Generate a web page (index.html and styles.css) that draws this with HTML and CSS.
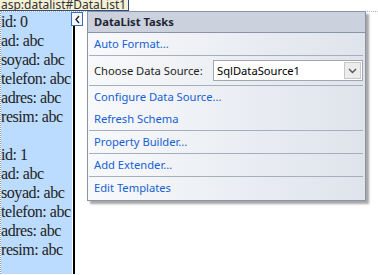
FILE: index.html
```html
<!DOCTYPE html>
<html lang="en">
  <head>
    <meta charset="UTF-8" />
    <title>DataList Tasks</title>
    <link rel="stylesheet" href="styles.css">
  </head>
  <body>
    <div class="design-tag">asp:datalist#DataList1</div>
    <div class="surface">
      <div class="datalist">
        <div class="item">
          <div>id: 0</div>
          <div>ad: abc</div>
          <div>soyad: abc</div>
          <div>telefon: abc</div>
          <div>adres: abc</div>
          <div>resim: abc</div>
        </div>
        <div class="item">
          <div>id: 1</div>
          <div>ad: abc</div>
          <div>soyad: abc</div>
          <div>telefon: abc</div>
          <div>adres: abc</div>
          <div>resim: abc</div>
        </div>
      </div>
      <div class="cell-edge"></div>

      <button class="smart-tag">
        <svg width="7" height="9" viewBox="0 0 7 9">
          <path d="M5 1 L2 4.5 L5 8" fill="none" stroke="#1e1e1e" stroke-width="1.3" />
        </svg>
      </button>

      <div class="tasks">
        <div class="tasks-head">DataList Tasks</div>
        <div class="tasks-group">
          <a class="task-link">Auto Format...</a>
        </div>
        <div class="tasks-group source-row">
          <span class="source-label">Choose Data Source:</span>
          <div class="combo">
            <span class="combo-text">SqlDataSource1</span>
            <span class="combo-btn">
              <svg width="9" height="6" viewBox="0 0 9 6">
                <path d="M1 1 L4.5 4.5 L8 1" fill="none" stroke="#555" stroke-width="1.4" />
              </svg>
            </span>
          </div>
        </div>
        <div class="tasks-group">
          <a class="task-link">Configure Data Source...</a>
          <a class="task-link">Refresh Schema</a>
        </div>
        <div class="tasks-group">
          <a class="task-link">Property Builder...</a>
        </div>
        <div class="tasks-group">
          <a class="task-link">Add Extender...</a>
        </div>
        <div class="tasks-group last">
          <a class="task-link">Edit Templates</a>
        </div>
      </div>
    </div>
  </body>
</html>
```

FILE: styles.css
```css
body {
  margin: 0;
  background: #fff;
  width: 378px;
  height: 275px;
  overflow: hidden;
  font-family: "Noto Sans", "Open Sans", sans-serif;
}
.design-tag {
  width: max-content;
  box-sizing: border-box;
  height: 12px;
  margin-top: -1px;
  padding: 0 2px 0 1px;
  background: #f4f1d6;
  border: 1px solid #2f4a86;
  border-left: none;
  font-size: 12px;
  line-height: 9px;
  color: #333;
  overflow: hidden;
}
.surface {
  position: relative;
  display: flex;
  border-top: 1px dotted #b0b0b0;
  border-left: 1px dotted #9a9a9a;
  height: 262px;
}
.datalist {
  width: 71px;
  background: #bcdcff;
  font-family: "Liberation Serif", serif;
  font-size: 16px;
  line-height: 19px;
  letter-spacing: -0.45px;
  color: #222;
  white-space: nowrap;
  overflow: hidden;
}
.item {
  margin-bottom: 19px;
}
.cell-edge {
  width: 2px;
  margin-left: 1px;
  background: #000;
}
.smart-tag {
  position: absolute;
  left: 70px;
  top: 0;
  width: 12px;
  height: 14px;
  padding: 0;
  border: 1px solid #3d6db5;
  background: #f4f6fa;
  display: flex;
  align-items: center;
  justify-content: center;
}
.tasks {
  position: absolute;
  left: 86px;
  top: -1px;
  width: 279px;
  height: 190px;
  box-sizing: border-box;
  border: 1px solid #8a93a8;
  background: linear-gradient(to right, #f8f9fb, #dfe4ec);
  box-shadow: 3px 3px 2px rgba(60, 60, 60, 0.45);
  font-size: 11.2px;
}
.tasks-head {
  height: 20px;
  line-height: 20px;
  padding-left: 6px;
  background: #ccd2dd;
  border-bottom: 1px solid #8a93a8;
  font-weight: bold;
  color: #1e2433;
}
.tasks-group {
  display: flex;
  flex-direction: column;
  border-bottom: 1px solid #a7afbf;
  margin: 0 2px 0 1px;
}
.tasks-group.last {
  border-bottom: none;
}
.task-link {
  height: 22px;
  line-height: 21px;
  padding-left: 5px;
  color: #1560d4;
  cursor: pointer;
}
.source-row {
  flex-direction: row;
  align-items: center;
  height: 29px;
  padding-left: 5px;
  color: #1e1e1e;
}
.source-label {
  width: 119px;
}
.combo {
  display: flex;
  align-items: center;
  box-sizing: border-box;
  width: 150px;
  height: 21px;
  border: 1px solid #a3a6ad;
  background: #fff;
}
.combo-text {
  flex: 1;
  padding-left: 3px;
  color: #000;
}
.combo-btn {
  display: flex;
  align-items: center;
  justify-content: center;
  box-sizing: border-box;
  width: 17px;
  height: 17px;
  margin-right: 1px;
  border: 1px solid #c5c7cc;
  background: #ececec;
}
```
